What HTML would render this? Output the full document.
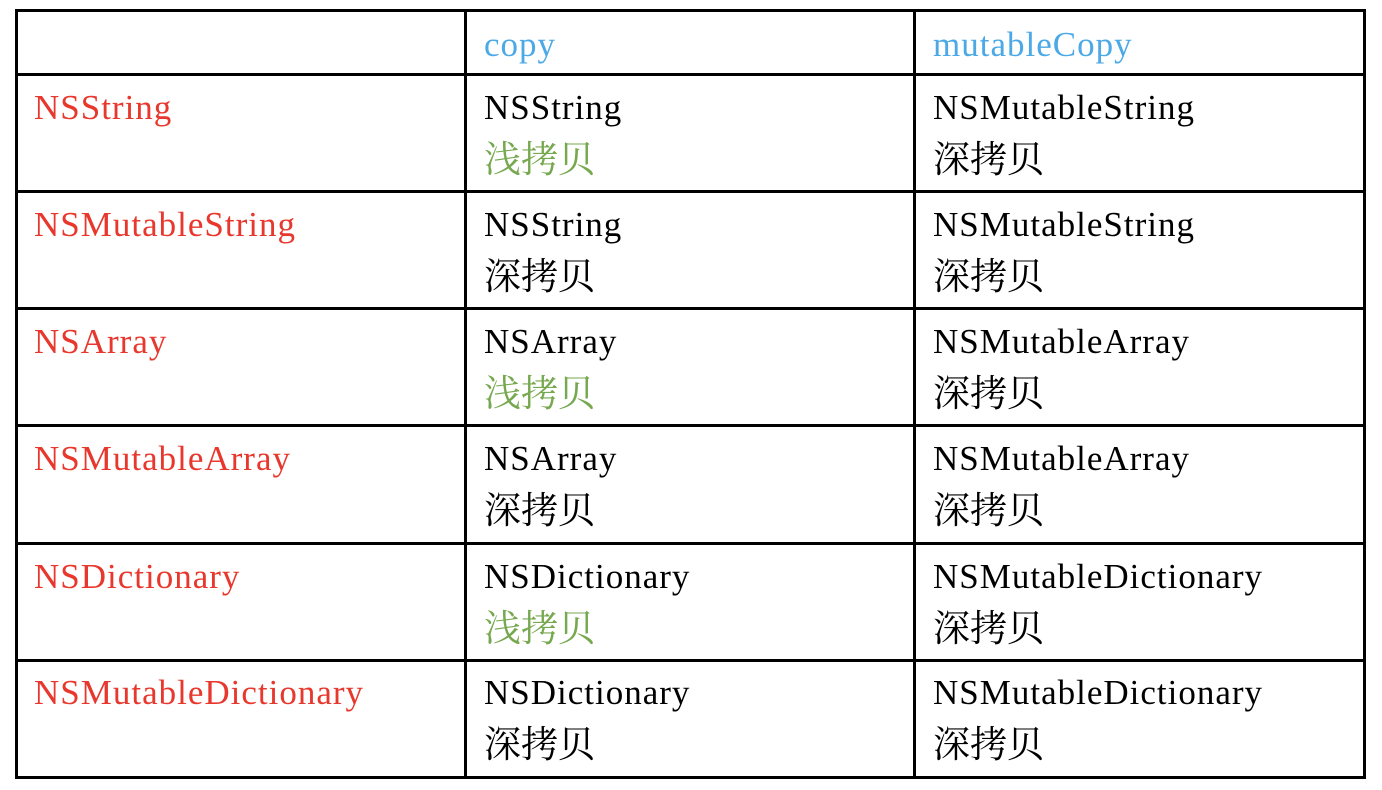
<!DOCTYPE html>
<html><head><meta charset="utf-8"><style>
body{margin:0;width:1382px;height:790px;background:#fff;position:relative;overflow:hidden;font-family:"Liberation Serif","Noto Serif CJK SC",serif;}
.h{position:absolute;left:15px;width:1351px;height:3px;background:#000;}
.v{position:absolute;top:9px;height:770px;width:3px;background:#000;}
.c{position:absolute;font-size:35px;line-height:52px;letter-spacing:1px;color:#000;white-space:nowrap;}
.c span,.z{font-size:37px;letter-spacing:0;position:relative;top:1px;}
.r{color:#e8372c}.b{color:#4aa9e6}.g{color:#76a84f}
</style></head><body>
<div class="h" style="top:9px"></div>
<div class="h" style="top:73px"></div>
<div class="h" style="top:190px"></div>
<div class="h" style="top:307px"></div>
<div class="h" style="top:424px"></div>
<div class="h" style="top:542px"></div>
<div class="h" style="top:659px"></div>
<div class="h" style="top:776px"></div>
<div class="v" style="left:15px"></div>
<div class="v" style="left:464px"></div>
<div class="v" style="left:913px"></div>
<div class="v" style="left:1363px"></div>

<div class="c b" style="left:484px;top:19px">copy</div>
<div class="c b" style="left:933px;top:19px">mutableCopy</div>

<div class="c r" style="left:34px;top:82px">NSString</div>
<div class="c" style="left:484px;top:82px">NSString<br><span class="g">浅拷贝</span></div>
<div class="c" style="left:933px;top:82px">NSMutableString<br><span>深拷贝</span></div>

<div class="c r" style="left:34px;top:199px">NSMutableString</div>
<div class="c" style="left:484px;top:199px">NSString<br><span>深拷贝</span></div>
<div class="c" style="left:933px;top:199px">NSMutableString<br><span>深拷贝</span></div>

<div class="c r" style="left:34px;top:316px">NSArray</div>
<div class="c" style="left:484px;top:316px">NSArray<br><span class="g">浅拷贝</span></div>
<div class="c" style="left:933px;top:316px">NSMutableArray<br><span>深拷贝</span></div>

<div class="c r" style="left:34px;top:433px">NSMutableArray</div>
<div class="c" style="left:484px;top:433px">NSArray<br><span>深拷贝</span></div>
<div class="c" style="left:933px;top:433px">NSMutableArray<br><span>深拷贝</span></div>

<div class="c r" style="left:34px;top:551px">NSDictionary</div>
<div class="c" style="left:484px;top:551px">NSDictionary<br><span class="g">浅拷贝</span></div>
<div class="c" style="left:933px;top:551px">NSMutableDictionary<br><span>深拷贝</span></div>

<div class="c r" style="left:34px;top:667px">NSMutableDictionary</div>
<div class="c" style="left:484px;top:667px">NSDictionary<br><span>深拷贝</span></div>
<div class="c" style="left:933px;top:667px">NSMutableDictionary<br><span>深拷贝</span></div>
</body></html>
